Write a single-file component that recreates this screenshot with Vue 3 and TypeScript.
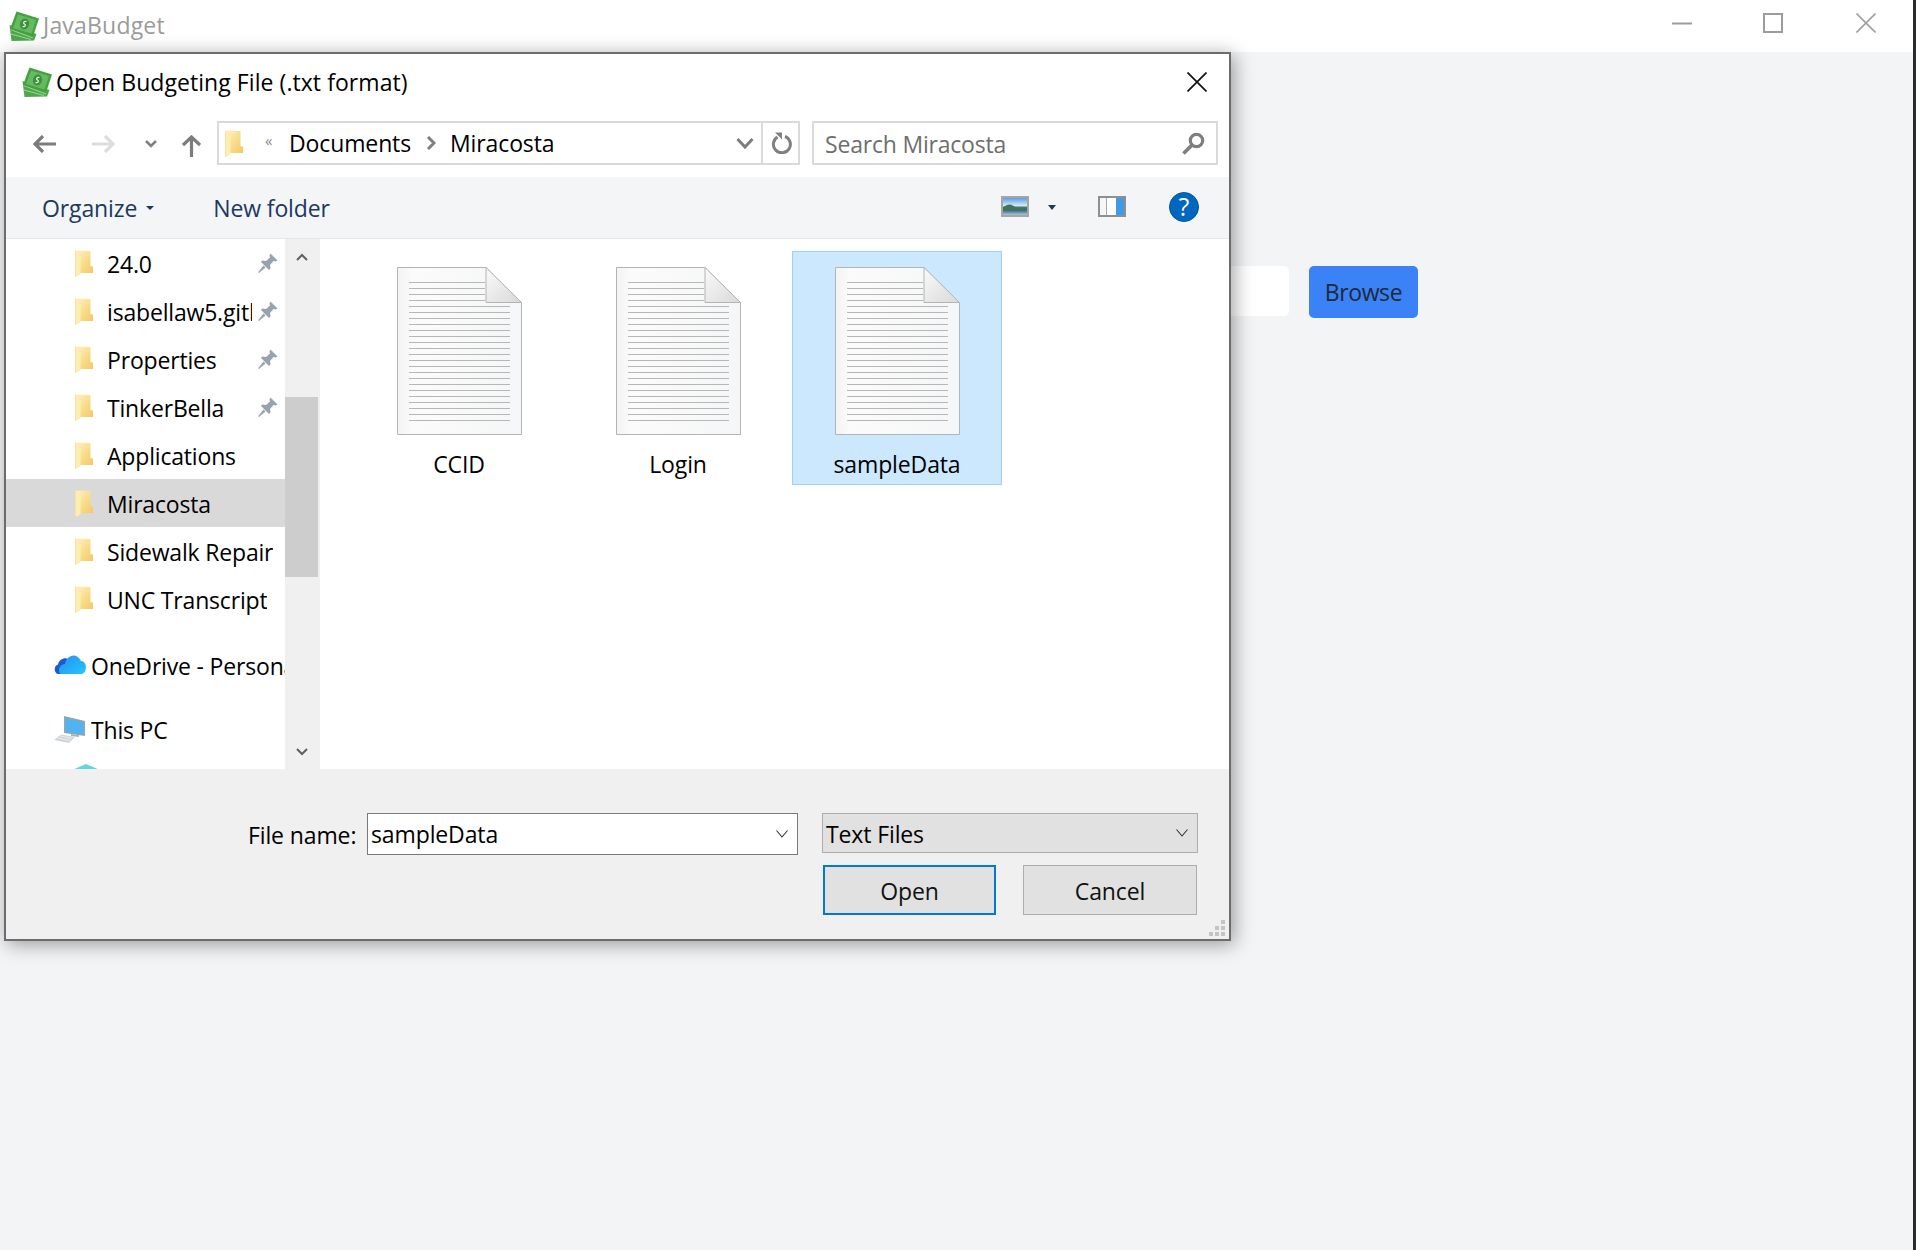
<script setup lang="ts">
interface NavRow { label: string; kind: string; pinned?: boolean; active?: boolean; cls?: string }

const quick: NavRow[] = [
  { label: '24.0', kind: 'folder', pinned: true },
  { label: 'isabellaw5.github.io', kind: 'folder', pinned: true },
  { label: 'Properties', kind: 'folder', pinned: true },
  { label: 'TinkerBella', kind: 'folder', pinned: true },
  { label: 'Applications', kind: 'folder' },
  { label: 'Miracosta', kind: 'folder', active: true },
  { label: 'Sidewalk Repair', kind: 'folder' },
  { label: 'UNC Transcript', kind: 'folder' },
]
const files = [
  { name: 'CCID', selected: false },
  { name: 'Login', selected: false },
  { name: 'sampleData', selected: true },
]
const lines = Array.from({ length: 24 }, (_, i) => ({
  y: 15.5 + i * 6,
  x2: i < 4 ? 88 : 113,
}))
</script>

<template>
  <div class="app">
    <svg class="defs" width="0" height="0" aria-hidden="true">
      <defs>
        <linearGradient id="fold" x1="0" y1="0" x2="1" y2="1">
          <stop offset="0" stop-color="#fff2bd" />
          <stop offset="1" stop-color="#f4c862" />
        </linearGradient>
        <linearGradient id="sheet" x1="0" y1="0" x2="1" y2="0">
          <stop offset="0" stop-color="#f3f3f3" />
          <stop offset="0.12" stop-color="#fbfbfb" />
          <stop offset="1" stop-color="#f5f6f7" />
        </linearGradient>
        <linearGradient id="corner" x1="0" y1="0" x2="1" y2="1">
          <stop offset="0" stop-color="#fafafa" />
          <stop offset="1" stop-color="#d9d9d9" />
        </linearGradient>
        <linearGradient id="cloudA" x1="0" y1="0" x2="1" y2="1">
          <stop offset="0" stop-color="#1f62d8" />
          <stop offset="1" stop-color="#1b4fc4" />
        </linearGradient>
        <linearGradient id="cloudB" x1="0" y1="0" x2="1" y2="1">
          <stop offset="0" stop-color="#2a8cf0" />
          <stop offset="1" stop-color="#23c8fb" />
        </linearGradient>
        <linearGradient id="land" x1="0" y1="0" x2="0" y2="1">
          <stop offset="0" stop-color="#5a9de8" />
          <stop offset="0.45" stop-color="#d6e8f5" />
          <stop offset="0.55" stop-color="#4b7f5a" />
          <stop offset="0.7" stop-color="#2f5f86" />
          <stop offset="1" stop-color="#a9c8dd" />
        </linearGradient>
        <symbol id="money" viewBox="0 0 30 30">
          <path d="M0.500 14 L2.500 30 L25 29.500 L27.500 23 Z" fill="#4fa64b" />
          <path d="M1.500 18.500 L24 27 M2 23 L22 28.500" stroke="#a5dca0" stroke-width="0.900" />
          <path d="M7.500 0.500 L30 7.500 L24 25.500 L1 18 Z" fill="#46a043" />
          <path d="M9 3.500 L27 9 L22.500 22.500 L4 17 Z" fill="#64ba5e" />
          <ellipse cx="15.500" cy="13" rx="4.500" ry="5.500" fill="#3f8f3c" transform="rotate(18 15.500 13)" />
          <path d="M17.500 10.500 C14.500 9.500 14 12.500 15.500 13 C17 13.500 16.500 16.500 13.500 15.500" fill="none" stroke="#e8f7e4" stroke-width="1.200" />
        </symbol>
        <symbol id="folder" viewBox="0 0 18 27">
          <path d="M1 0.500 L15.500 1 V16 L18 16.500 V23 H5 Z" fill="url(#fold)" />
          <path d="M0 0.500 L5.500 2.500 V24 L1 27 L0 25 Z" fill="#ffedb0" />
          <path d="M0 0.500 V25 L1 27" fill="none" stroke="#e8cf88" stroke-width="0.600" />
        </symbol>
        <symbol id="pin" viewBox="0 0 20 20">
          <path d="M12.500 0.500 L19.500 7.500 L17.500 8.500 L15.500 8 L12 12 L12.500 15.500 L11 17 L3 9 L4.500 7.500 L8 8 L12 4.500 L11.500 2.500 Z" fill="#98a3ac" />
          <path d="M5.500 12.500 L7.500 14.500 L1 20 L0 19.500 Z" fill="#98a3ac" />
        </symbol>
        <symbol id="doc" viewBox="0 0 125 168">
          <path d="M0.500 0.500 H89 L124.500 36 V167.500 H0.500 Z" fill="url(#sheet)" stroke="#b4b4b4" />
          <path d="M89 0.500 V35.500 H124.500 Z" fill="url(#corner)" stroke="#b4b4b4" />
        </symbol>
      </defs>
    </svg>

    <header class="titlebar">
      <svg class="logo"><use href="#money" /></svg>
      <span class="app-name">JavaBudget</span>
      <div class="win-controls">
        <svg class="wc" viewBox="0 0 20 20"><path d="M0 10.500 H20" stroke="#9c9c9c" stroke-width="2" /></svg>
        <svg class="wc" viewBox="0 0 20 20"><rect x="1" y="1" width="18" height="18" fill="none" stroke="#9c9c9c" stroke-width="2" /></svg>
        <svg class="wc" viewBox="0 0 20 20"><path d="M0.500 0.500 L19.500 19.500 M19.500 0.500 L0.500 19.500" stroke="#a0a0a0" stroke-width="1.600" /></svg>
      </div>
    </header>

    <main class="page">
      <div class="form-row">
        <div class="path-input"></div>
        <button class="browse" type="button">Browse</button>
      </div>
    </main>

    <div class="screen-edge"></div>

    <section class="dialog">
      <div class="dlg-title">
        <svg class="logo dlg-logo"><use href="#money" /></svg>
        <span class="dlg-name">Open Budgeting File (.txt format)</span>
        <svg class="dlg-close" viewBox="0 0 20 20"><path d="M0.500 0.500 L19.500 19.500 M19.500 0.500 L0.500 19.500" stroke="#111" stroke-width="1.700" /></svg>
      </div>

      <div class="nav">
        <svg class="nav-back" viewBox="0 0 23 18"><path d="M10 1 L2 9 L10 17 M2 9 H23" fill="none" stroke="#7c7c7c" stroke-width="3.200" /></svg>
        <svg class="nav-fwd" viewBox="0 0 23 18"><path d="M13 1 L21 9 L13 17 M21 9 H0" fill="none" stroke="#dcdcdc" stroke-width="3.200" /></svg>
        <svg class="nav-recent" viewBox="0 0 12 8"><path d="M1 1 L6 6 L11 1" fill="none" stroke="#808080" stroke-width="2.600" /></svg>
        <svg class="nav-up" viewBox="0 0 19 22"><path d="M1 10 L9.500 2 L18 10 M9.500 2 V22" fill="none" stroke="#7c7c7c" stroke-width="3.200" /></svg>

        <div class="address">
          <svg class="addr-folder"><use href="#folder" /></svg>
          <span class="addr-more">«</span>
          <span class="addr-seg">Documents</span>
          <svg class="addr-sep" viewBox="0 0 10 14"><path d="M2 1 L8 7 L2 13" fill="none" stroke="#7f7f7f" stroke-width="3" /></svg>
          <span class="addr-seg">Miracosta</span>
          <svg class="addr-drop" viewBox="0 0 18 12"><path d="M1.500 2 L9 10 L16.500 2" fill="none" stroke="#7d7d7d" stroke-width="3" /></svg>
          <span class="addr-refresh">
            <svg viewBox="0 0 21 22"><path d="M6.500 5 A8.500 8.500 0 1 0 14 4.400" fill="none" stroke="#808080" stroke-width="3" /><path d="M5 0.500 H12 V7.500 Z" fill="#808080" transform="translate(-1 0)" /></svg>
          </span>
        </div>

        <div class="search">
          <span class="search-text">Search Miracosta</span>
          <svg class="search-icon" viewBox="0 0 23 23"><circle cx="14.500" cy="8.500" r="6.200" fill="none" stroke="#7f7f7f" stroke-width="3.200" /><path d="M10 13 L1.500 21.500" stroke="#7f7f7f" stroke-width="3.800" /></svg>
        </div>
      </div>

      <div class="toolbar">
        <span class="tool-organize">Organize</span>
        <span class="caret organize-caret"></span>
        <span class="tool-new">New folder</span>
        <span class="tool-spacer"></span>
        <span class="view-icon"><svg viewBox="0 0 24 17" preserveAspectRatio="none"><rect width="24" height="17" fill="url(#land)" /><path d="M0 10 C5 5 9 6 13 10 L24 11.500 V12.500 H0 Z" fill="#43745a" /></svg></span>
        <span class="caret view-caret"></span>
        <span class="panes-icon"><i></i><i></i><i></i></span>
        <span class="help">?</span>
      </div>

      <div class="body">
        <nav class="tree">
          <div class="tree-scroll">
            <div v-for="r in quick" :key="r.label" class="row quick" :class="{ active: r.active }">
              <svg class="folder-icon"><use href="#folder" /></svg>
              <span class="row-label" :class="{ clipped: r.pinned }">{{ r.label }}</span>
              <svg v-if="r.pinned" class="pin"><use href="#pin" /></svg>
            </div>

            <div class="row top-level onedrive">
              <svg class="root-icon cloud-icon" viewBox="0 0 32 21">
                <path d="M11 21 H5 C0 21 -1 13 4 11.500 C5 6 11 4 14 6 Z" fill="url(#cloudA)" />
                <path d="M6 21 C3 16 7 11 11 11 C12 3 22 -2 27 8 C31 8 33 13 31.500 17 C31 19.500 29 21 27 21 Z" fill="url(#cloudB)" />
              </svg>
              <span class="row-label">OneDrive - Personal</span>
            </div>

            <div class="row top-level thispc">
              <svg class="root-icon pc-icon" viewBox="0 0 32 27">
                <path d="M10 0 L31 5 V20 L10 17 Z" fill="#8fa6b5" />
                <path d="M11.500 2 L29.500 6.200 V18.500 L11.500 15.500 Z" fill="#50b4f0" />
                <path d="M17 18 L25 19 V21 L17 20 Z" fill="#a9b4bb" />
                <path d="M7 18.500 L21 21 L15 27 L0 24 Z" fill="#cfd5d9" />
                <path d="M6 20 L18 22.200 M4 22 L16 24.500" stroke="#f2f4f5" stroke-width="0.800" />
              </svg>
              <span class="row-label">This PC</span>
            </div>

            <div class="row quick objects">
              <svg class="cube-icon" viewBox="0 0 28 27">
                <path d="M14 0 L28 6 L14 12 L0 6 Z" fill="#62d4e2" />
                <path d="M0 6 L14 12 V27 L0 21 Z" fill="#2fb3c8" />
                <path d="M28 6 L14 12 V27 L28 21 Z" fill="#1a96b0" />
              </svg>
              <span class="row-label">3D Objects</span>
            </div>
          </div>

          <div class="scrollbar">
            <svg class="sb-arrow up" viewBox="0 0 12 8"><path d="M1 7 L6 2 L11 7" fill="none" stroke="#606060" stroke-width="2" /></svg>
            <div class="sb-thumb"></div>
            <svg class="sb-arrow down" viewBox="0 0 12 8"><path d="M1 1 L6 6 L11 1" fill="none" stroke="#606060" stroke-width="2" /></svg>
          </div>
        </nav>

        <div class="files">
          <div v-for="f in files" :key="f.name" class="tile" :class="{ selected: f.selected }">
            <svg class="doc" viewBox="0 0 125 168">
              <use href="#doc" />
              <path v-for="l in lines" :key="l.y" :d="`M12 ${l.y} H${l.x2}`" stroke="#b7b7b7" stroke-width="1" />
            </svg>
            <span class="tile-name">{{ f.name }}</span>
          </div>
        </div>
      </div>

      <footer class="footer">
        <div class="name-row">
          <label class="fn-label">File name:</label>
          <div class="fn-input">
            <span>sampleData</span>
            <svg class="thin-chev" viewBox="0 0 12 8"><path d="M0.500 0.500 L6 7 L11.500 0.500" fill="none" stroke="#333" stroke-width="1.100" /></svg>
          </div>
          <div class="fn-type">
            <span class="type-text">Text Files</span>
            <svg class="thin-chev" viewBox="0 0 12 8"><path d="M0.500 0.500 L6 7 L11.500 0.500" fill="none" stroke="#333" stroke-width="1.100" /></svg>
          </div>
        </div>
        <div class="btn-row">
          <button class="dlg-btn primary" type="button">Open</button>
          <button class="dlg-btn" type="button">Cancel</button>
        </div>
        <svg class="grip" viewBox="0 0 16 16">
          <g fill="#c4c4c4">
            <rect x="12" y="0" width="4" height="4" />
            <rect x="12" y="6" width="4" height="4" />
            <rect x="6" y="6" width="4" height="4" />
            <rect x="12" y="12" width="4" height="4" />
            <rect x="6" y="12" width="4" height="4" />
            <rect x="0" y="12" width="4" height="4" />
          </g>
        </svg>
      </footer>
    </section>
  </div>
</template>

<style>
html, body { margin: 0; background: #f3f4f6; }
</style>

<style scoped>
.app {
  position: relative;
  width: 1916px;
  height: 1250px;
  overflow: hidden;
  background: #f3f4f6;
  font-family: "Open Sans", "Noto Sans", "Liberation Sans", sans-serif;
  font-size: 23px;
  letter-spacing: -0.12px;
  color: #000;
}
.defs { position: absolute; }

.titlebar {
  height: 52px;
  background: #fff;
  display: flex;
  align-items: center;
  padding-left: 9px;
}
.logo { width: 30px; height: 30px; display: block; flex: none; }
.app-name { margin-left: 4px; color: #9b9b9b; padding-bottom: 3px; letter-spacing: 0.2px; }
.win-controls {
  margin-left: auto;
  margin-right: 40px;
  display: flex;
  gap: 72px;
  padding-bottom: 6px;
}
.wc { width: 20px; height: 20px; display: block; }
.wc:nth-child(2) { margin-left: -1px; margin-right: 1px; }

.page { padding-top: 214px; }
.form-row { display: flex; align-items: flex-start; padding-left: 1100px; gap: 20px; }
.path-input { width: 189px; height: 50px; background: #fff; border-radius: 5px; }
.browse {
  width: 109px;
  height: 52px;
  border: 0;
  border-radius: 5px;
  background: #3b82f6;
  color: #1f2937;
  font: inherit;
  letter-spacing: -0.4px;
  padding: 0;
}
.screen-edge {
  position: absolute;
  top: 0;
  right: 0;
  width: 3px;
  height: 100%;
  background: #2b2b2d;
}

.dialog {
  position: absolute;
  left: 4px;
  top: 52px;
  width: 1227px;
  height: 889px;
  box-sizing: border-box;
  border: 2px solid #6c6c6c;
  background: #fff;
  box-shadow: 3px 3px 18px rgba(0, 0, 0, 0.38);
  display: flex;
  flex-direction: column;
}
.dlg-title {
  height: 67px;
  flex: none;
  box-sizing: border-box;
  display: flex;
  align-items: center;
  padding: 0 22px 12px 16px;
}
.dlg-name { margin-left: 4px; letter-spacing: 0.06px; }
.dlg-close { width: 20px; height: 20px; margin-left: auto; }

.nav {
  height: 56px;
  flex: none;
  display: flex;
  align-items: flex-start;
  padding-left: 27px;
}
.nav svg { display: block; flex: none; }
.nav-back { width: 23px; height: 18px; margin-top: 14px; }
.nav-fwd { width: 23px; height: 18px; margin-top: 14px; margin-left: 36px; }
.nav-recent { width: 12px; height: 8px; margin-top: 19px; margin-left: 30px; }
.nav-up { width: 19px; height: 22px; margin-top: 14px; margin-left: 25px; }
.address {
  width: 583px;
  height: 44px;
  box-sizing: border-box;
  margin-left: 16px;
  border: 2px solid #dadada;
  display: flex;
  align-items: center;
  flex: none;
}
.addr-folder { width: 18px; height: 27px; margin-left: 6px; }
.addr-more { margin-left: 22px; width: 24px; color: #8a8a8a; font-size: 15px; margin-top: -6px; }
.addr-sep { width: 10px; height: 14px; margin-left: 15px; margin-right: 14px; }
.addr-drop { width: 18px; height: 12px; margin-left: auto; margin-right: 7px; }
.addr-refresh {
  width: 37px;
  height: 100%;
  border-left: 2px solid #dadada;
  box-sizing: border-box;
  display: flex;
  align-items: center;
  justify-content: center;
  padding-left: 2px;
}
.addr-refresh svg { width: 21px; height: 22px; }
.search {
  width: 406px;
  height: 44px;
  box-sizing: border-box;
  margin-left: 12px;
  border: 2px solid #dadada;
  display: flex;
  align-items: center;
  padding: 0 11px 0 11px;
  flex: none;
}
.search-text { color: #6e6e6e; padding-top: 2px; letter-spacing: -0.2px; }
.search-icon { width: 23px; height: 23px; margin-left: auto; }

.toolbar {
  height: 62px;
  flex: none;
  box-sizing: border-box;
  background: #f4f5f7;
  border-bottom: 1px solid #e6e7e9;
  display: flex;
  align-items: center;
  color: #1b3a5f;
  padding-left: 36px;
}
.caret {
  width: 0;
  height: 0;
  border-left: 4px solid transparent;
  border-right: 4px solid transparent;
  border-top: 4px solid #1b3a5f;
}
.organize-caret { margin-left: 9px; }
.tool-new { margin-left: 59px; }
.tool-spacer { flex: 1; }
.view-icon {
  width: 28px;
  height: 21px;
  box-sizing: border-box;
  border: 2px solid #a5a5a5;
  background: #fff;
  display: block;
  margin-top: -2px;
}
.view-icon svg { width: 100%; height: 100%; display: block; }
.view-caret { margin-left: 19px; margin-top: -1px; border-top-width: 5px; }
.panes-icon {
  width: 28px;
  height: 21px;
  box-sizing: border-box;
  border: 2px solid #8f8f8f;
  margin-left: 42px;
  margin-top: -2px;
  display: flex;
  background: #fff;
}
.panes-icon i { display: block; }
.panes-icon i:nth-child(1) { width: 6px; background: #f6f6f6; border-right: 1px solid #a8a8a8; }
.panes-icon i:nth-child(2) { width: 9px; background: #fff; }
.panes-icon i:nth-child(3) { flex: 1; background: #429ae3; }
.help {
  width: 30px;
  height: 30px;
  border-radius: 50%;
  background: #0067c0;
  border: 1px solid #00549e;
  box-sizing: border-box;
  color: #fff;
  font-weight: 500;
  font-size: 25px;
  line-height: 27px;
  text-align: center;
  margin-left: 43px;
  margin-right: 30px;
  margin-top: -2px;
  letter-spacing: 0;
}

.body {
  height: 530px;
  flex: none;
  display: flex;
  background: #fff;
  overflow: hidden;
}
.tree { display: flex; flex: none; width: 312px; border-right: 2px solid #f0f0f0; box-sizing: content-box; }
.tree-scroll { width: 279px; flex: none; overflow: hidden; height: 530px; }
.row {
  height: 48px;
  display: flex;
  align-items: center;
  position: relative;
  white-space: nowrap;
}
.quick { padding-left: 69px; }
.quick.active { background: #d9d9d9; }
.folder-icon { width: 18px; height: 27px; flex: none; display: block; margin-top: 1px; }
.row-label { margin-left: 14px; padding-top: 1px; overflow: hidden; letter-spacing: -0.18px; }
.row-label.clipped { width: 145px; flex: none; }
.pin { width: 20px; height: 20px; position: absolute; left: 252px; top: 14px; }
.top-level { padding-left: 48px; }
.onedrive { margin-top: 18px; }
.thispc { margin-top: 16px; }
.root-icon { width: 32px; height: 21px; flex: none; display: block; }
.cloud-icon { margin-top: -3px; }
.pc-icon { height: 27px; }
.top-level .row-label { margin-left: 5px; }
.cube-icon { width: 28px; height: 27px; flex: none; margin-left: -3px; margin-top: 1px; }
.objects .row-label { margin-left: 8px; }

.scrollbar {
  width: 33px;
  background: #f0f0f0;
  position: relative;
  flex: none;
}
.sb-thumb {
  position: absolute;
  left: 0;
  right: 0;
  top: 158px;
  height: 180px;
  background: #cdcdcd;
}
.sb-arrow { position: absolute; left: 11px; width: 12px; height: 8px; }
.sb-arrow.up { top: 14px; }
.sb-arrow.down { top: 509px; }

.files {
  flex: 1;
  display: flex;
  align-items: flex-start;
  gap: 9px;
  padding: 12px 0 0 34px;
}
.tile {
  width: 210px;
  height: 234px;
  box-sizing: border-box;
  border: 1px solid transparent;
  display: flex;
  flex-direction: column;
  align-items: center;
  padding-top: 15px;
}
.tile.selected { background: #cce8ff; border-color: #99d1ff; }
.doc { width: 125px; height: 168px; flex: none; display: block; }
.tile-name { margin-top: 11px; line-height: 36px; }

.footer {
  height: 170px;
  flex: none;
  background: #f0f0f0;
  position: relative;
  padding-top: 44px;
  box-sizing: border-box;
}
.name-row { display: flex; align-items: flex-start; height: 42px; padding-left: 242px; }
.fn-label { width: 119px; line-height: 44px; }
.fn-input {
  width: 431px;
  height: 42px;
  box-sizing: border-box;
  background: #fff;
  border: 1.500px solid #7a7a7a;
  display: flex;
  align-items: center;
  padding: 0 9px 0 3px;
  justify-content: space-between;
}
.fn-type {
  width: 376px;
  height: 40px;
  box-sizing: border-box;
  margin-left: 24px;
  background: #e1e1e1;
  border: 1.500px solid #adadad;
  display: flex;
  align-items: center;
  padding: 0 9px 0 3px;
  justify-content: space-between;
}
.type-text { padding-top: 2px; }
.thin-chev { width: 12px; height: 8px; display: block; }
.btn-row { display: flex; gap: 27px; margin-top: 10px; padding-left: 817px; }
.dlg-btn {
  width: 174px;
  height: 50px;
  box-sizing: border-box;
  border: 1.500px solid #adadad;
  background: #e1e1e1;
  font: inherit;
  letter-spacing: inherit;
  color: #111;
  padding: 2px 0 0;
}
.dlg-btn.primary { width: 173px; border: 2px solid #0078d7; }
.grip { position: absolute; right: 4px; bottom: 3px; width: 16px; height: 16px; }
</style>
